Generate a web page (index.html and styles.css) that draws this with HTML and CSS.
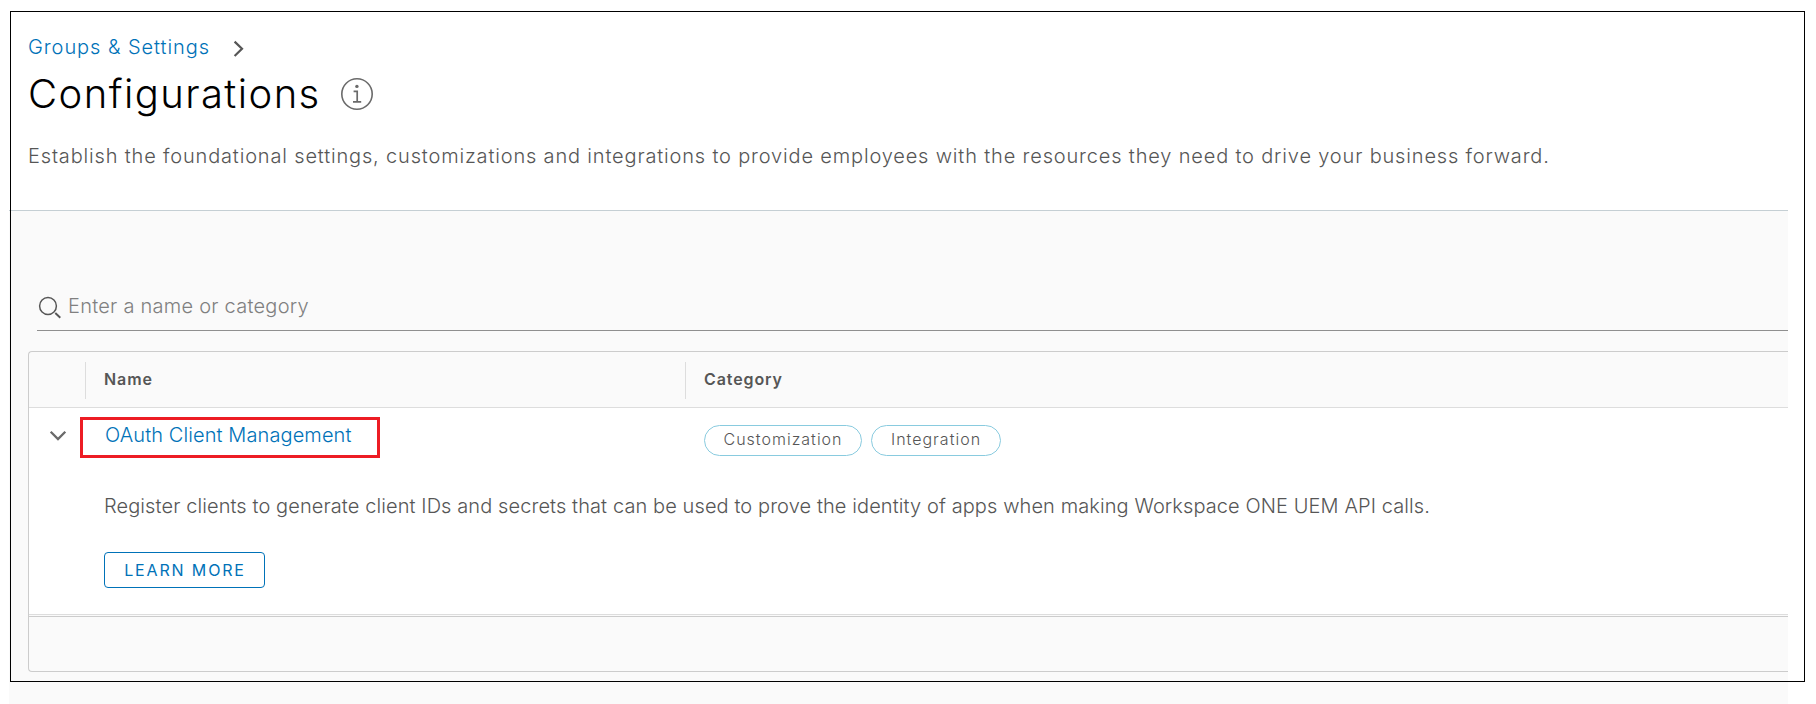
FILE: index.html
```
<!DOCTYPE html>
<html lang="en">
<head>
<meta charset="utf-8">
<title>Configurations</title>
<link rel="stylesheet" href="styles.css">
</head>
<body>
<main class="page">
  <header class="header">
    <nav class="breadcrumb">
      <a class="breadcrumb-link" href="#">Groups &amp; Settings</a>
      <svg class="breadcrumb-arrow" width="12" height="18" viewBox="0 0 12 18"><path d="M1.6 1.6 9 8.8 1.6 16" fill="none" stroke="#565656" stroke-width="2.2"/></svg>
    </nav>
    <div class="title-row">
      <h1 class="title">Configurations</h1>
      <svg class="info" width="34" height="34" viewBox="0 0 34 34" fill="none" stroke="#6a6a6a"><circle cx="17" cy="17" r="15.2" stroke-width="1.6"/><path d="M13.6 14.4h3.6v10.2M13 24.8h8.2" stroke-width="1.7"/><circle cx="16.9" cy="9.4" r="1.7" fill="#6a6a6a" stroke="none"/></svg>
    </div>
    <p class="intro">Establish the foundational settings, customizations and integrations to provide employees with the resources they need to drive your business forward.</p>
  </header>
  <section class="content">
    <div class="search">
      <svg class="search-icon" width="24" height="24" viewBox="0 0 24 24" fill="none" stroke="#565656" stroke-width="1.5"><circle cx="10" cy="10" r="8.4"/><path d="m17.3 17 5 4.7" stroke-width="1.9"/></svg>
      <span class="search-text">Enter a name or category</span>
    </div>
    <div class="grid">
      <div class="grid-head">
        <div class="cell-toggle"></div>
        <div class="head-cell head-name">Name</div>
        <div class="head-cell head-category">Category</div>
      </div>
      <div class="row">
        <div class="cell-toggle"><svg class="chevron" width="18" height="12" viewBox="0 0 18 12"><path d="m1.7 1.7 7.3 7.4 7.3-7.4" fill="none" stroke="#6a6a6a" stroke-width="2.3"/></svg></div>
        <div class="cell-name"><a class="name-link" href="#">OAuth Client Management</a></div>
        <div class="cell-category"><span class="tag tag-custom">Customization</span><span class="tag tag-integration">Integration</span></div>
      </div>
      <div class="detail">
        <p class="detail-text">Register clients to generate client IDs and secrets that can be used to prove the identity of apps when making Workspace ONE UEM API calls.</p>
        <a class="button" href="#">LEARN MORE</a>
      </div>
      <div class="grid-foot"></div>
    </div>
  </section>
</main>
<div class="frame"></div>
</body>
</html>
```
FILE: styles.css
```
*, ::after { box-sizing: border-box; }
body {
  margin: 0;
  height: 704px;
  overflow: hidden;
  background: #fff;
  color: #565656;
  font: 300 20px/24px Inter, "Liberation Sans", sans-serif;
}
a { color: #0072b8; text-decoration: none; }
p, h1 { margin: 0; }
svg { display: block; flex: none; }

.page {
  display: flex;
  flex-direction: column;
  width: 1779px;
  height: 704px;
  margin-left: 9px;
}
.header {
  height: 211px;
  padding: 35px 0 0 19px;
  border-bottom: 1px solid #c5cfd4;
  white-space: nowrap;
}
.breadcrumb { display: flex; height: 24px; }
.breadcrumb-link { width: 205px; letter-spacing: .94px; }
.breadcrumb-arrow { margin-top: 5px; }
.title-row { display: flex; height: 48px; margin-top: 11px; }
.title {
  width: 312px;
  color: #000;
  font-size: 40px;
  font-weight: 300;
  line-height: 48px;
  letter-spacing: 1.43px;
}
.info { margin-top: 7px; }
.intro { margin-top: 26px; letter-spacing: .833px; }

.content { flex: 1; padding: 75px 0 0 19px; background: #fafafa; }
.search {
  display: flex;
  height: 45px;
  margin-left: 9px;
  padding: 8px 0 0 1px;
  border-bottom: 1px solid #8f8f8f;
}
.search-icon { margin-top: 2px; }
.search-text { margin-left: 6px; color: #808080; letter-spacing: .25px; }

.grid {
  height: 321px;
  margin-top: 20px;
  border: 1px solid #ccc;
  border-right: 0;
  border-radius: 4px 0 0 4px;
}
.grid-head {
  display: flex;
  height: 56px;
  padding: 10px 0 8px;
  border-bottom: 1px solid #ddd;
}
.cell-toggle { flex: none; width: 56px; }
.head-cell {
  padding: 5px 0 0 18px;
  border-left: 1px solid #ddd;
  font-size: 16px;
  font-weight: 600;
  letter-spacing: .9px;
}
.head-name { width: 600px; }
.row { display: flex; height: 72px; background: #fff; }
.chevron { margin: 22px 0 0 20px; }
.cell-name { width: 600px; padding: 15px 0 0 20px; }
.cell-category { display: flex; gap: 9px; padding: 17px 0 0 19px; }
.tag {
  height: 31px;
  border: 1px solid #89cbdf;
  border-radius: 16px;
  font-size: 16px;
  line-height: 27px;
  letter-spacing: 1px;
  text-align: center;
}
.tag-custom { width: 158px; }
.tag-integration { width: 130px; }
.detail {
  height: 135px;
  padding: 14px 0 0 75px;
  background: #fff;
  border-bottom: 1px solid #ddd;
  white-space: nowrap;
}
.detail-text { letter-spacing: .097px; }
.name-link { position: relative; letter-spacing: .1px; }
.button {
  display: block;
  width: 161px;
  height: 36px;
  margin-top: 34px;
  padding-left: 1px;
  border: 1px solid #0072b8;
  border-radius: 4px;
  font-size: 16px;
  font-weight: 400;
  line-height: 35px;
  letter-spacing: 1.85px;
  text-align: center;
}
.grid-foot { height: 56px; margin-top: 1px; border-top: 1px solid #ccc; }
.name-link::after {
  content: "";
  position: absolute;
  left: -25px;
  top: -6px;
  width: 300px;
  height: 41px;
  border: 3px solid #ed1c24;
}
.frame {
  position: absolute;
  left: 10px;
  top: 11px;
  width: 1795px;
  height: 671px;
  border: 1px solid #000;
  pointer-events: none;
}
```
